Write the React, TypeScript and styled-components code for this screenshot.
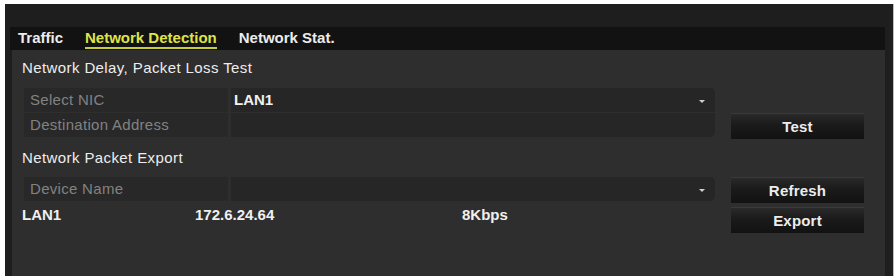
import React from 'react';
import styled, { createGlobalStyle } from 'styled-components';

const GlobalStyle = createGlobalStyle`
  html, body {
    margin: 0;
    background: #ffffff;
    font-family: 'Liberation Sans', Arial, sans-serif;
  }
`;

const Frame = styled.div`
  margin: 4px 2px 0 5px;
  height: 272px;
  background: #1e1e1e;
  border-right: 1px solid #bdbdbd;
  padding: 23px 8px 0 5px;
  box-sizing: border-box;
  display: flex;
  flex-direction: column;
`;

const TabBar = styled.div`
  height: 23px;
  box-sizing: border-box;
  background: #121212;
  display: flex;
  align-items: flex-end;
  gap: 22px;
  padding: 0 0 1px 8px;
`;

const Tab = styled.div<{ $active?: boolean }>`
  font-size: 15px;
  font-weight: bold;
  line-height: 16px;
  color: ${(p) => (p.$active ? '#dfe34a' : '#ececec')};
  border-bottom: 2px solid ${(p) => (p.$active ? '#c9cc3c' : 'transparent')};
  padding-bottom: 1px;
`;

const Content = styled.div`
  flex: 1;
  background: #2e2e2e;
  margin-left: 2px;
  padding: 8px 20px 0 10px;
  display: flex;
  flex-direction: column;
`;

const SectionTitle = styled.div`
  font-size: 15px;
  letter-spacing: 0.4px;
  color: #ededed;
  height: 20px;
  line-height: 20px;
`;

const Block = styled.div<{ $align: string }>`
  display: flex;
  align-items: ${(p) => p.$align};
  gap: 16px;
  margin-left: 2px;
`;

const Column = styled.div`
  width: 691px;
  display: flex;
  flex-direction: column;
`;

const Table = styled.div`
  display: flex;
  flex-direction: column;
  gap: 1px;
`;

const Row = styled.div`
  display: flex;
  height: 24px;
  gap: 3px;
`;

const LabelCell = styled.div`
  width: 198px;
  background: #282828;
  color: #828282;
  font-size: 15px;
  letter-spacing: 0.3px;
  line-height: 24px;
  padding-left: 6px;
`;

const ValueCell = styled.div<{ $top?: boolean; $bottom?: boolean }>`
  flex: 1;
  background: #262626;
  color: #f0f0f0;
  font-size: 15px;
  font-weight: bold;
  line-height: 24px;
  padding-left: 3px;
  padding-right: 10px;
  display: flex;
  justify-content: space-between;
  align-items: center;
  border-top-right-radius: ${(p) => (p.$top ? '5px' : '0')};
  border-bottom-right-radius: ${(p) => (p.$bottom ? '5px' : '0')};
`;

const Caret = styled.span`
  width: 0;
  height: 0;
  border-left: 3px solid transparent;
  border-right: 3px solid transparent;
  border-top: 3px solid #cfcfcf;
  margin-top: 2px;
`;

const Buttons = styled.div`
  display: flex;
  flex-direction: column;
  gap: 4px;
`;

const Button = styled.div`
  width: 133px;
  height: 26px;
  box-sizing: border-box;
  background: linear-gradient(#2a2a2a 0%, #1a1a1a 45%, #121212 100%);
  border-top: 1px solid #3a3a3a;
  color: #ececec;
  font-size: 15px;
  font-weight: bold;
  letter-spacing: 0.2px;
  display: flex;
  align-items: center;
  justify-content: center;
`;

const Spacer = styled.div<{ $h: number }>`
  height: ${(p) => p.$h}px;
`;

const InfoRow = styled.div`
  display: grid;
  grid-template-columns: 173px 267px auto;
  font-size: 15px;
  font-weight: bold;
  color: #f0f0f0;
  margin: 6px 0 0 -2px;
  line-height: 16px;
`;

export default function App() {
  return (
    <>
      <GlobalStyle />
      <Frame>
        <TabBar>
          <Tab>Traffic</Tab>
          <Tab $active>Network Detection</Tab>
          <Tab>Network Stat.</Tab>
        </TabBar>
        <Content>
          <SectionTitle>Network Delay, Packet Loss Test</SectionTitle>
          <Spacer $h={10} />
          <Block $align="flex-end">
            <Column>
              <Table>
                <Row>
                  <LabelCell>Select NIC</LabelCell>
                  <ValueCell $top>
                    LAN1
                    <Caret />
                  </ValueCell>
                </Row>
                <Row>
                  <LabelCell>Destination Address</LabelCell>
                  <ValueCell $bottom />
                </Row>
              </Table>
            </Column>
            <Buttons>
              <Button style={{ marginBottom: -2 }}>Test</Button>
            </Buttons>
          </Block>
          <Spacer $h={11} />
          <SectionTitle>Network Packet Export</SectionTitle>
          <Spacer $h={9} />
          <Block $align="flex-start">
            <Column>
              <Table>
                <Row>
                  <LabelCell>Device Name</LabelCell>
                  <ValueCell $top $bottom>
                    <span />
                    <Caret />
                  </ValueCell>
                </Row>
              </Table>
              <InfoRow>
                <span>LAN1</span>
                <span>172.6.24.64</span>
                <span>8Kbps</span>
              </InfoRow>
            </Column>
            <Buttons>
              <Button>Refresh</Button>
              <Button>Export</Button>
            </Buttons>
          </Block>
        </Content>
      </Frame>
    </>
  );
}
